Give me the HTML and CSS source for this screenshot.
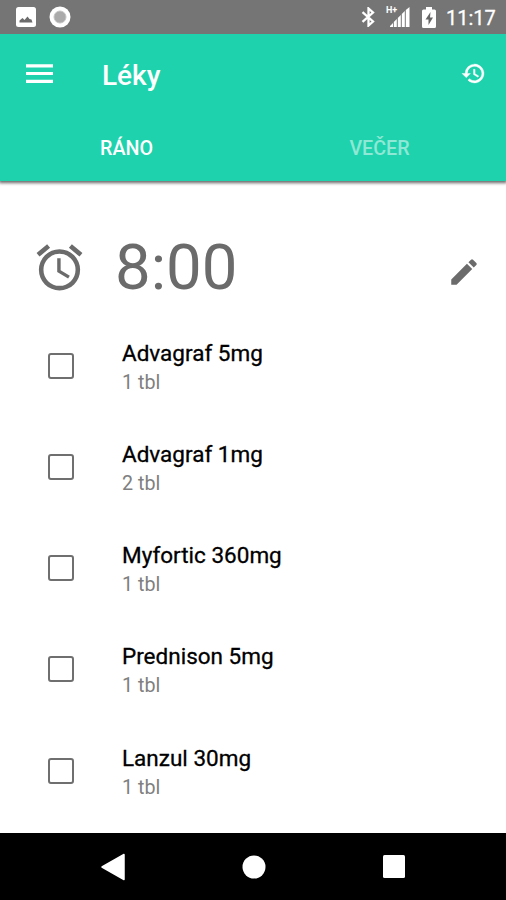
FILE: index.html
```html
<!DOCTYPE html>
<html lang="cs">
<head>
	<meta charset="utf-8">
	<meta name="viewport" content="width=device-width, initial-scale=1">
	<title>Léky</title>
	<link rel="stylesheet" href="styles.css">
</head>
<body>
	<!-- Status bar -->
	<div class="status">
		<svg class="status-photo" width="20" height="20" viewBox="0 0 20 20">
			<rect width="20" height="20" rx="2.5" fill="#fff"/>
			<path d="M3.500 15.500v-2l3-2.500 2 2 3-3.500 2 2.500 2 .5 1 3z" fill="#6b6b6b"/>
		</svg>
		<svg class="status-dot" width="22" height="22" viewBox="0 0 22 22">
			<circle cx="11" cy="11" r="10.5" fill="#fff"/>
			<circle cx="11" cy="11" r="6" fill="#aaa" stroke="#c4c4c4"/>
		</svg>
		<svg class="status-bt" width="15" height="20" viewBox="0 0 15 20">
			<path d="M1.500 5.200 12 14.500 7.500 18.500v-17L12 5.500 1.500 14.800" fill="none" stroke="#fff" stroke-width="2.300"/>
		</svg>
		<span class="status-net">H+</span>
		<svg class="status-signal" width="20" height="20" viewBox="0 0 20 20">
			<path d="M0 20v-1l3-3v4zM3.800 20v-5l3-3v8zM7.800 20v-9l3-3v12zM11.800 20V7l3-3v16zM15.800 20V3L19.500 0v20z" fill="#fff"/>
		</svg>
		<svg class="status-battery" width="14" height="21" viewBox="0 0 14 21">
			<path d="M4 0h6v2.500h2.500Q14 2.500 14 4v15.500Q14 21 12.500 21h-11Q0 21 0 19.500V4Q0 2.500 1.500 2.500H4z" fill="#fff"/>
			<path d="M8.500 5 3.500 12.500h3V18l4.500-7.500H8z" fill="#666"/>
		</svg>
		<span class="status-time">11:17</span>
	</div>

	<!-- Toolbar and tabs -->
	<header class="header">
		<div class="toolbar">
			<svg class="menu" width="27" height="20" viewBox="0 0 27 20">
				<path d="M0 1.900h27M0 9.500h27M0 17.300h27" stroke="#fff" stroke-width="3.200"/>
			</svg>
			<h1 class="title">Léky</h1>
			<svg class="history" width="25" height="25" viewBox="0 0 24 24" fill="#fff" stroke="#fff" stroke-width=".4">
				<path d="M13 3a9 9 0 0 0-9 9H1l3.900 3.900.070.140L9 12H6a7 7 0 1 1 2.060 4.940l-1.420 1.420A9 9 0 1 0 13 3zm-1 5v5l4.280 2.540.720-1.210-3.500-2.080V8z"/>
			</svg>
		</div>
		<nav class="tabs">
			<span class="tab tab-active">RÁNO</span>
			<span class="tab">VEČER</span>
		</nav>
	</header>

	<main class="content">
		<!-- Alarm time -->
		<div class="alarm">
			<svg class="alarm-icon" width="55" height="55" viewBox="0 0 24 24" fill="#6b6b6b">
				<path d="M22 5.720l-4.600-3.860-1.290 1.530 4.600 3.860L22 5.720zM7.880 3.390L6.600 1.860 2 5.710l1.290 1.530 4.590-3.850zM12.500 8H11v6l4.750 2.850.750-1.230-4-2.370V8zM12 4a9 9 0 1 0 0 18 9 9 0 0 0 0-18zm0 16a7 7 0 1 1 0-14 7 7 0 0 1 0 14z"/>
			</svg>
			<span class="alarm-time">8:00</span>
			<svg class="edit" width="34" height="34" viewBox="0 0 24 24" fill="#6b6b6b">
				<path d="M3 17.250V21h3.750L17.810 9.940l-3.750-3.750L3 17.250zM20.710 7.040a1 1 0 0 0 0-1.410l-2.340-2.340a1 1 0 0 0-1.410 0l-1.830 1.830 3.750 3.750 1.830-1.830z"/>
			</svg>
		</div>

		<!-- Medicines -->
		<ul class="list">
			<li class="item">
				<span class="checkbox"></span>
				<div class="text">
					<div class="name">Advagraf 5mg</div>
					<div class="dose">1 tbl</div>
				</div>
			</li>
			<li class="item">
				<span class="checkbox"></span>
				<div class="text">
					<div class="name">Advagraf 1mg</div>
					<div class="dose">2 tbl</div>
				</div>
			</li>
			<li class="item">
				<span class="checkbox"></span>
				<div class="text">
					<div class="name">Myfortic 360mg</div>
					<div class="dose">1 tbl</div>
				</div>
			</li>
			<li class="item">
				<span class="checkbox"></span>
				<div class="text">
					<div class="name">Prednison 5mg</div>
					<div class="dose">1 tbl</div>
				</div>
			</li>
			<li class="item">
				<span class="checkbox"></span>
				<div class="text">
					<div class="name">Lanzul 30mg</div>
					<div class="dose">1 tbl</div>
				</div>
			</li>
		</ul>
	</main>

	<!-- Android navigation -->
	<footer class="navbar">
		<svg width="24" height="28" viewBox="0 0 24 28">
			<path d="M1 14 23 1.500v25z" fill="#fff" stroke="#fff" stroke-width="1.500" stroke-linejoin="round"/>
		</svg>
		<svg width="24" height="24" viewBox="0 0 24 24">
			<circle cx="12" cy="12" r="11.500" fill="#fff"/>
		</svg>
		<svg width="22" height="23" viewBox="0 0 22 23">
			<rect width="22" height="23" rx="1.500" fill="#fff"/>
		</svg>
	</footer>
</body>
</html>
```
FILE: styles.css
```css
*{
	margin: 0;
	padding: 0;
	box-sizing: border-box;
}
body{
	display: flex;
	flex-direction: column;
	height: 900px;
	overflow: hidden;
	font-family: Roboto, sans-serif;
	background-color: #fff;
	color: #000;
}
svg{
	display: block;
	flex: none;
}

/* Status bar */
.status{
	position: relative;
	z-index: 1;
	display: flex;
	align-items: center;
	height: 34px;
	padding: 0 10px 0 16px;
	background-color: #757575;
	color: #fff;
}
.status-dot{
	margin-left: 13px;
}
.status-bt{
	margin-left: auto;
}
.status-net{
	align-self: flex-start;
	width: 13px;
	margin: 6px -9px 0 10px;
	font-size: 9px;
	font-weight: 700;
	line-height: 9px;
}
.status-battery{
	margin-left: 12px;
}
.status-time{
	width: 50px;
	margin: 2px 0 0 10px;
	font-size: 20px;
	line-height: 34px;
	white-space: nowrap;
	-webkit-text-stroke: .3px;
}

/* Header */
.header{
	position: relative;
	height: 147px;
	background-color: #1dd2ac;
	color: #fff;
	box-shadow: 0 1px 3px 1px rgba(0, 0, 0, .6);
}
.toolbar{
	display: flex;
	align-items: center;
	height: 79px;
	padding: 0 20px 0 26px;
}
.title{
	margin: 4px 0 0 49px;
	font-size: 28px;
	font-weight: 500;
	line-height: 34px;
}
.history{
	margin-left: auto;
}
.tabs{
	display: flex;
	height: 68px;
}
.tab{
	flex: 1;
	text-align: center;
	font-size: 19.7px;
	font-weight: 500;
	line-height: 71px;
	color: rgba(255, 255, 255, .5);
}
.tab-active{
	color: #fff;
}

/* Content */
.content{
	flex: 1;
	padding-top: 46px;
}
.alarm{
	display: flex;
	align-items: center;
	height: 80px;
	padding: 0 25px 0 32px;
}
.alarm-time{
	margin: 2px 0 0 28px;
	font-size: 63.5px;
	line-height: 80px;
	color: #6b6b6b;
}
.edit{
	margin: 9px 0 0 auto;
}
.list{
	padding-top: 8px;
	list-style: none;
}
.item{
	display: flex;
	align-items: center;
	height: 101.25px;
	padding-left: 48px;
}
.checkbox{
	width: 26px;
	height: 26px;
	border: 2px solid #6f6f6f;
	border-radius: 3px;
}
.text{
	margin: 4px 0 0 48px;
}
.name{
	font-size: 22.5px;
	line-height: 28px;
	-webkit-text-stroke: .3px;
}
.dose{
	padding-top: 1px;
	font-size: 19.7px;
	line-height: 29px;
	color: #808080;
}

/* Navigation bar */
.navbar{
	position: relative;
	display: flex;
	align-items: center;
	justify-content: space-between;
	height: 67px;
	padding: 0 101px;
	background-color: #000;
}
```
